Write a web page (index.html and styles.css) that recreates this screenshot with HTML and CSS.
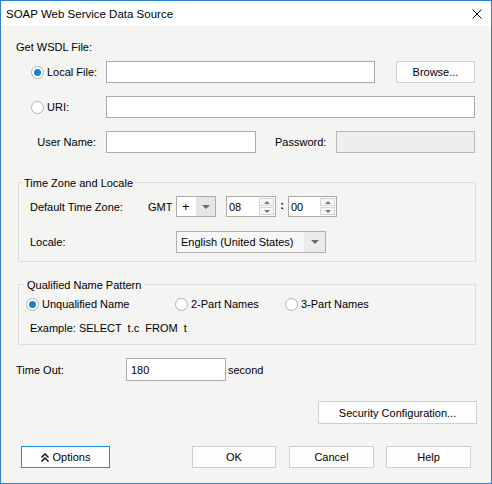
FILE: index.html
```html
<!DOCTYPE html>
<html lang="en">
<head>
  <meta charset="UTF-8" />
  <title>SOAP Web Service Data Source</title>
  <link rel="stylesheet" href="styles.css">
</head>
<body>
  <div class="window">
    <div class="titlebar">
      <span class="title">SOAP Web Service Data Source</span>
      <svg class="close" width="10" height="10" viewBox="0 0 10 10">
        <path d="M0.5 0.5 L9.5 9.5 M9.5 0.5 L0.5 9.5" stroke="#000" stroke-width="1" fill="none" />
      </svg>
    </div>

    <div class="content">
      <div class="section-label">Get WSDL File:</div>

      <div class="row row-local">
        <label class="radio-opt"><span class="radio checked"></span>Local File:</label>
        <div class="input w-local"></div>
        <button class="btn btn-browse">Browse...</button>
      </div>

      <div class="row row-uri">
        <label class="radio-opt"><span class="radio"></span>URI:</label>
        <div class="input w-uri"></div>
      </div>

      <div class="row row-user">
        <span class="lbl lbl-user">User Name:</span>
        <div class="input w-user"></div>
        <span class="lbl lbl-pass">Password:</span>
        <div class="input disabled w-pass"></div>
      </div>

      <div class="group group-tz">
        <div class="group-title">Time Zone and Locale</div>
        <div class="row row-tz">
          <span class="lbl lbl-tz">Default Time Zone:</span>
          <span class="lbl lbl-gmt">GMT</span>
          <div class="combo combo-sign">
            <span class="combo-text">+</span>
            <span class="combo-arrow"><span class="tri"></span></span>
          </div>
          <div class="spinner spin-hour">
            <span class="spin-text">08</span>
            <span class="spin-btns">
              <span class="spin-btn"><span class="tri-up"></span></span>
              <span class="spin-btn"><span class="tri-down"></span></span>
            </span>
          </div>
          <span class="colon">:</span>
          <div class="spinner spin-min">
            <span class="spin-text">00</span>
            <span class="spin-btns">
              <span class="spin-btn"><span class="tri-up"></span></span>
              <span class="spin-btn"><span class="tri-down"></span></span>
            </span>
          </div>
        </div>
        <div class="row row-locale">
          <span class="lbl lbl-locale">Locale:</span>
          <div class="combo combo-locale">
            <span class="combo-text">English (United States)</span>
            <span class="combo-arrow"><span class="tri"></span></span>
          </div>
        </div>
      </div>

      <div class="group group-qn">
        <div class="group-title">Qualified Name Pattern</div>
        <div class="row row-qn">
          <label class="radio-opt opt-1"><span class="radio checked"></span>Unqualified Name</label>
          <label class="radio-opt opt-2"><span class="radio"></span>2-Part Names</label>
          <label class="radio-opt opt-3"><span class="radio"></span>3-Part Names</label>
        </div>
        <div class="row row-example">Example: SELECT  t.c  FROM  t</div>
      </div>

      <div class="row row-timeout">
        <span class="lbl lbl-timeout">Time Out:</span>
        <div class="input w-timeout"><span class="input-text">180</span></div>
        <span class="lbl lbl-second">second</span>
      </div>

      <div class="row row-security">
        <button class="btn btn-security">Security Configuration...</button>
      </div>

      <div class="row row-bottom">
        <button class="btn btn-options">
          <svg width="8" height="9" viewBox="0 0 8 9">
            <path d="M0.5 4.5 L4 1 L7.5 4.5 M0.5 8.5 L4 5 L7.5 8.5" stroke="#000" stroke-width="1.3" fill="none" />
          </svg>
          Options
        </button>
        <button class="btn btn-ok">OK</button>
        <button class="btn btn-cancel">Cancel</button>
        <button class="btn btn-help">Help</button>
      </div>
    </div>
  </div>
</body>
</html>
```

FILE: styles.css
```css
body {
  margin: 0;
  font-family: "Liberation Sans", Arial, sans-serif;
  font-size: 11px;
  color: #000;
}
.window {
  width: 492px;
  height: 484px;
  box-sizing: border-box;
  border: 1px solid #2b80d3;
  background-color: #f4f4f3;
  overflow: hidden;
}
.titlebar {
  height: 25px;
  background-color: #fff;
  display: flex;
  align-items: center;
}
.title {
  padding-left: 5px;
  font-size: 11.5px;
}
.close {
  margin-left: auto;
  margin-right: 9px;
  margin-top: 1px;
}

.section-label {
  margin: 14px 0 0 15px;
  line-height: 14px;
  height: 14px;
}
.row {
  display: flex;
  align-items: center;
}
.lbl {
  line-height: 14px;
  white-space: nowrap;
}

/* inputs */
.input {
  box-sizing: border-box;
  height: 22px;
  background-color: #fff;
  border: 1px solid #ababab;
  display: flex;
  align-items: center;
}
.input.disabled {
  background-color: #eeeeee;
  border-color: #b9b9b9;
}
.input-text {
  padding-left: 4px;
}

/* radios */
.radio-opt {
  display: flex;
  align-items: center;
  line-height: 14px;
}
.radio {
  box-sizing: border-box;
  width: 13px;
  height: 13px;
  border: 1px solid #b3b3b3;
  border-radius: 50%;
  background-color: #fff;
  margin-right: 3px;
  display: flex;
  align-items: center;
  justify-content: center;
}
.radio.checked::after {
  content: "";
  width: 7px;
  height: 7px;
  border-radius: 50%;
  background-color: #1482d8;
}

/* buttons */
.btn {
  box-sizing: border-box;
  height: 23px;
  padding: 0;
  font-family: inherit;
  font-size: 11px;
  color: #000;
  background-color: #fdfdfd;
  border: 1px solid #cfcfcf;
  display: flex;
  align-items: center;
  justify-content: center;
}

.row-local {
  margin-top: 7px;
  height: 22px;
  padding-left: 30px;
}
.row-local .radio-opt,
.row-uri .radio-opt {
  width: 75px;
}
.w-local { width: 269px; }
.btn-browse {
  margin-left: 21px;
  width: 79px;
  height: 22px;
}
.row-uri {
  margin-top: 13px;
  height: 22px;
  padding-left: 30px;
}
.w-uri { width: 369px; }

.row-user {
  margin-top: 13px;
  height: 22px;
}
.lbl-user {
  width: 95px;
  text-align: right;
}
.w-user {
  margin-left: 10px;
  width: 150px;
}
.lbl-pass {
  margin-left: 19px;
  width: 61px;
}
.w-pass { width: 139px; }

/* group boxes */
.group {
  margin-left: 17px;
  width: 458px;
  box-sizing: border-box;
  border: 1px solid #dcdcdc;
}
.group-title {
  width: fit-content;
  margin: -7px 0 0 3px;
  padding: 0 2px;
  line-height: 14px;
  background-color: #f4f4f3;
}
.group-tz {
  margin-top: 29px;
  padding-bottom: 8px;
}
.group-tz .row {
  padding-left: 11px;
}
.row-tz {
  margin-top: 6px;
  height: 21px;
}
.lbl-tz { width: 118px; }
.lbl-gmt { width: 28px; }

.combo {
  box-sizing: border-box;
  height: 21px;
  border: 1px solid #ababab;
  background-color: #fff;
  display: flex;
}
.combo-text {
  flex: 1;
  display: flex;
  align-items: center;
  padding-left: 4px;
  white-space: nowrap;
}
.combo-arrow {
  width: 19px;
  background-color: #e6e6e6;
  display: flex;
  align-items: center;
  justify-content: center;
}
.tri {
  width: 0;
  height: 0;
  border-left: 4px solid transparent;
  border-right: 4px solid transparent;
  border-top: 4px solid #6e6e6e;
}
.combo-sign {
  width: 40px;
  font-size: 13px;
}
.combo-sign .combo-text {
  padding-left: 5px;
}

.spinner {
  box-sizing: border-box;
  height: 21px;
  border: 1px solid #ababab;
  background-color: #fff;
  display: flex;
}
.spin-hour {
  margin-left: 10px;
  width: 50px;
}
.spin-min { width: 49px; }
.spin-text {
  flex: 1;
  display: flex;
  align-items: center;
  padding-left: 2px;
}
.spin-btns {
  display: flex;
  flex-direction: column;
  gap: 1px;
  padding: 1px 1px 1px 0;
}
.spin-btn {
  box-sizing: border-box;
  width: 15px;
  flex: 1;
  border: 1px solid #d4d4d4;
  background-color: #f7f7f7;
  display: flex;
  align-items: center;
  justify-content: center;
}
.tri-up {
  width: 0;
  height: 0;
  border-left: 3px solid transparent;
  border-right: 3px solid transparent;
  border-bottom: 3px solid #777;
}
.tri-down {
  width: 0;
  height: 0;
  border-left: 3px solid transparent;
  border-right: 3px solid transparent;
  border-top: 3px solid #777;
}
.colon {
  width: 12px;
  text-align: center;
  font-weight: bold;
  margin-top: -4px;
}

.row-locale {
  margin-top: 14px;
  height: 22px;
}
.lbl-locale { width: 146px; }
.combo-locale {
  width: 150px;
  height: 22px;
  background-color: #f7f7f7;
  border-color: #b0b0b0;
}
.combo-locale .combo-arrow {
  width: 21px;
  background-color: #ebebeb;
}

.group-qn {
  margin-top: 22px;
  padding-bottom: 9px;
}
.group-qn .group-title {
  margin-left: 5px;
  padding: 0 3px;
}
.row-qn {
  margin-top: 5px;
  height: 14px;
  padding-left: 7px;
}
.opt-1 { width: 149px; }
.opt-2 { width: 110px; }
.row-example {
  margin-top: 10px;
  height: 14px;
  line-height: 14px;
  padding-left: 11px;
  white-space: pre;
}

.row-timeout {
  margin-top: 13px;
  height: 23px;
}
.lbl-timeout {
  margin-left: 15px;
  width: 110px;
}
.w-timeout {
  width: 100px;
  height: 23px;
}
.lbl-second { margin-left: 2px; }

.row-security {
  margin-top: 20px;
  height: 23px;
}
.btn-security {
  margin-left: 317px;
  width: 159px;
}

.row-bottom {
  margin-top: 22px;
  height: 22px;
}
.row-bottom .btn {
  height: 22px;
}
.btn-options {
  margin-left: 20px;
  width: 89px;
  border-color: #1a8ee2;
  gap: 4px;
}
.btn-ok {
  margin-left: 82px;
  width: 84px;
}
.btn-cancel {
  margin-left: 13px;
  width: 85px;
}
.btn-help {
  margin-left: 12px;
  width: 85px;
}
```
